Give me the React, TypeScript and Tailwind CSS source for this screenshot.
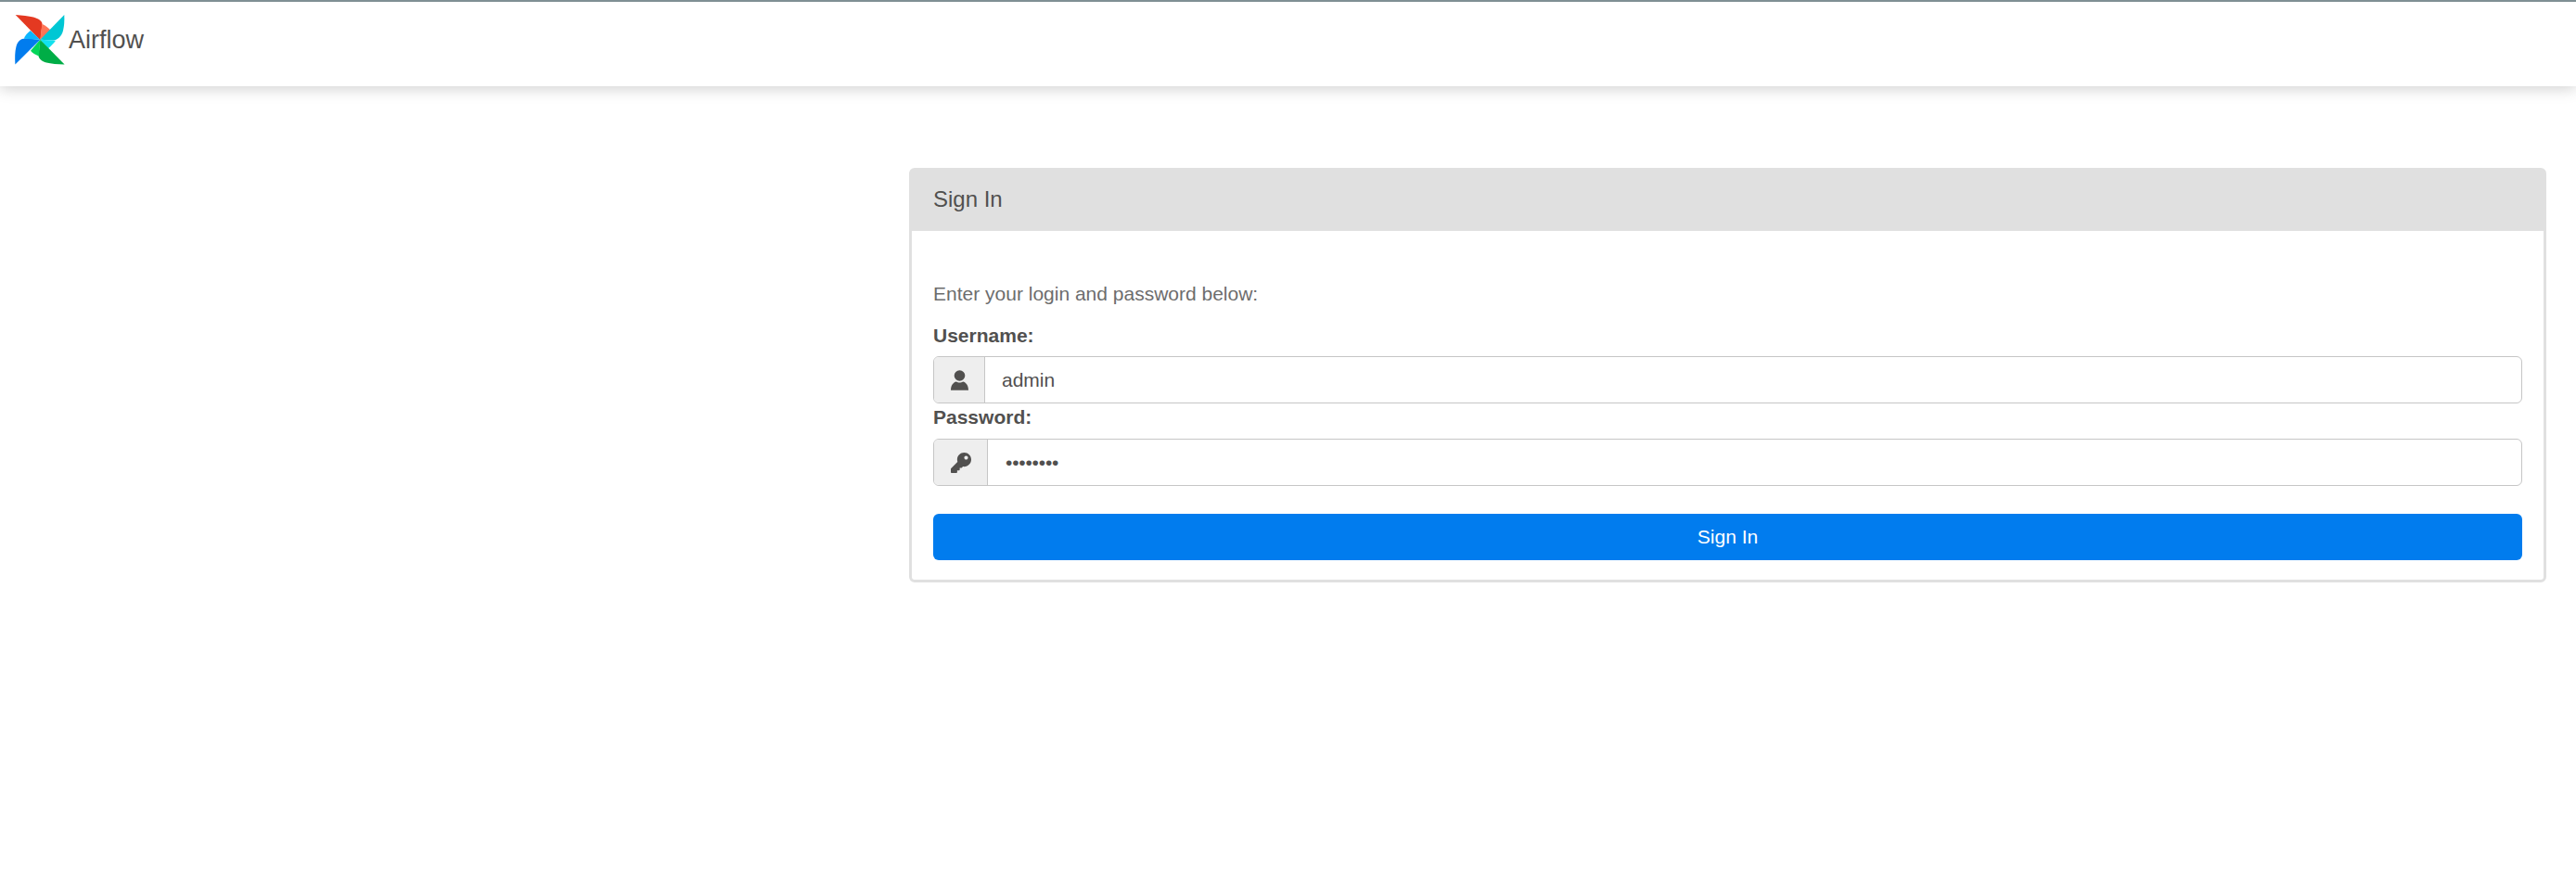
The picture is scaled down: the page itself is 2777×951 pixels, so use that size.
import { FaKey } from 'react-icons/fa'

function Logo() {
  return (
    <svg viewBox="0 0 54 54" className="size-[54px] shrink-0">
      <path d="M27 27 L0.7 0 C8 0.5 15 1.2 20 2.6 C26 4.3 29.5 7 29.5 10 L27.6 27 Z" fill="#e43921" />
      <path d="M27.3 26.7 L29.3 9.8 C33 11.5 36.5 14 39 17.2 Z" fill="#ff7557" />
      <path d="M27.3 26.7 L53.3 0 C53.5 6 53.3 12 52 17 C50.4 23 46 27.5 40.8 27.6 L27.3 26.7 Z" fill="#00c7d4" />
      <path d="M27.3 26.7 L44 27.7 C42 30.5 39 33.5 36 36.2 Z" fill="#11e1ee" />
      <path d="M27.3 26.7 L53.6 53.4 C46 53.4 39 53 34 51.6 C29 50 26 47.5 25.5 44 L27.3 26.7 Z" fill="#00ad46" />
      <path d="M27.3 26.7 L26 44.5 C22 43 19 41.5 17 38.8 Z" fill="#04d659" />
      <path d="M27.3 26.7 L0.4 53.4 C0 46 0 40 1.4 34.5 C3 28 7 25.2 12 25.6 L27.3 26.7 Z" fill="#017cee" />
      <path d="M27.3 26.7 L9.8 25.7 C11 22 13.5 19.5 16.8 17 Z" fill="#0cb6ff" />
    </svg>
  )
}

function UserIcon() {
  return (
    <svg viewBox="0 0 19 22" className="h-[22px] w-[19px]" fill="currentColor">
      <circle cx="9.5" cy="6" r="5.8" />
      <path d="M0 21.7 C0 17 2.5 13.2 6 12.6 C7 13.3 8 13.6 9.5 13.6 C11 13.6 12 13.3 13 12.6 C16.5 13.2 19 17 19 21.7 Z" />
    </svg>
  )
}

function Field({
  label,
  value,
  icon,
  addonWidth,
  labelGap,
  mask,
}: {
  label: string
  value: string
  icon: React.ReactNode
  addonWidth: string
  labelGap: string
  mask?: boolean
}) {
  return (
    <div>
      <div className="text-[21px] leading-[30px] font-bold text-[#51504f]">{label}</div>
      <div className={`flex h-[51px] rounded-[6px] border border-[#c6c6c6] ${labelGap}`}>
        <div className={`flex items-center justify-center rounded-l-[5px] border-r border-[#c6c6c6] bg-[#eee] text-[#51504f] ${addonWidth}`}>
          {icon}
        </div>
        <div className={`flex flex-1 items-center text-[21px] text-[#51504f] ${mask ? 'pl-[19px] tracking-[-0.2px]' : 'pl-[18px]'}`}>
          {value}
        </div>
      </div>
    </div>
  )
}

export default function App() {
  return (
    <div className="min-h-[951px] bg-white font-['Liberation_Sans',Arial,sans-serif]">
      <header className="flex h-[93px] items-start gap-1 border-t-2 border-[#7f8f94] bg-white pt-[14px] pl-4 shadow-[0_2px_16px_rgba(0,0,0,0.2)]">
        <Logo />
        <span className="mt-[12px] text-[27px] leading-[30px] text-[#51504f]">Airflow</span>
      </header>

      <div className="mt-[88px] ml-[980px] mr-[32px] rounded-[6px] border-[3px] border-[#e0e0e0]">
        <div className="flex h-[65px] items-center bg-[#e0e0e0] pb-[3px] pl-[23px] text-[24px] text-[#51504f]">Sign In</div>
        <div className="px-[23px] pt-[53px] pb-[21px]">
          <p className="text-[21px] leading-[30px] text-[#6d6d6d]">Enter your login and password below:</p>
          <div className="mt-[15px]">
            <Field label="Username:" value="admin" icon={<UserIcon />} addonWidth="w-[55px]" labelGap="mt-[7px]" />
            <Field label="Password:" value="••••••••" icon={<FaKey className="size-[22px]" />} addonWidth="w-[58px]" labelGap="mt-[8px]" mask />
          </div>
          <button className="mt-[30px] h-[50px] w-full rounded-[6px] bg-[#017cee] text-[21px] text-white">Sign In</button>
        </div>
      </div>
    </div>
  )
}
